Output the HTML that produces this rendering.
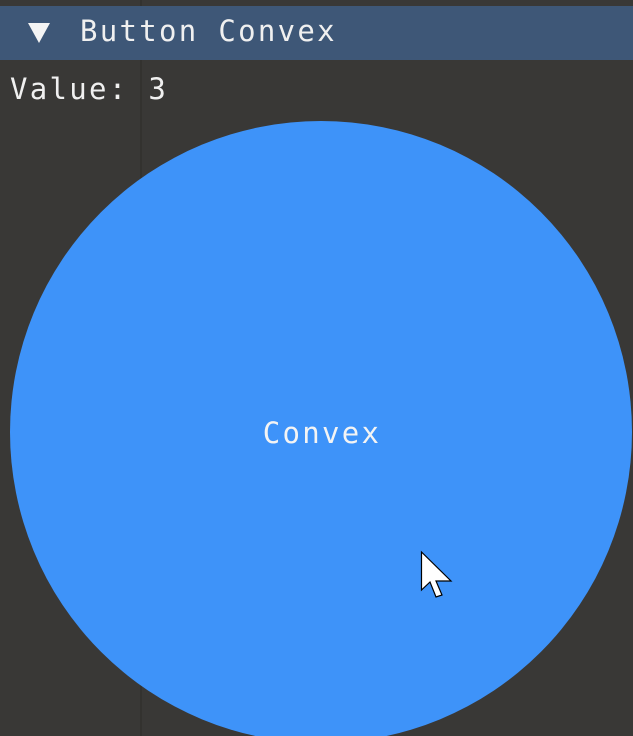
<!DOCTYPE html>
<html><head><style>
html,body{margin:0;padding:0;}
body{width:633px;height:736px;overflow:hidden;background:#393836;position:relative;font-family:"DejaVu Sans Mono","Liberation Mono",monospace;color:#f0f0f0;}
.bg1{position:absolute;left:140px;top:0;width:2px;height:736px;background:#33322f;}
.hdr{position:absolute;left:0;top:6px;width:633px;height:54px;background:#3e5777;}
.tri{position:absolute;left:28px;top:23px;width:0;height:0;border-left:11px solid transparent;border-right:11px solid transparent;border-top:20px solid #f4f4f4;}
.t{position:absolute;font-size:29px;letter-spacing:2.3px;line-height:1;white-space:pre;}
</style></head><body>
<div class="bg1"></div>
<div class="hdr"></div>
<div class="tri"></div>
<div class="t" style="left:80px;top:17px;">Button Convex</div>
<div class="t" style="left:10px;top:75px;">Value: 3</div>
<svg style="position:absolute;left:0;top:0" width="633" height="736">
<circle cx="321" cy="432" r="311" fill="#3e93f9"/>
<text x="322" y="443" font-family="DejaVu Sans Mono, Liberation Mono, monospace" font-size="29" letter-spacing="2.3" fill="#f4f4f4" text-anchor="middle">Convex</text>
<path d="M421.5 552 L421.5 590 L430 582 L436 597 L442 595 L436 581 L451 581 Z" fill="#fff" stroke="#000" stroke-width="1.2"/>
</svg>
</body></html>
